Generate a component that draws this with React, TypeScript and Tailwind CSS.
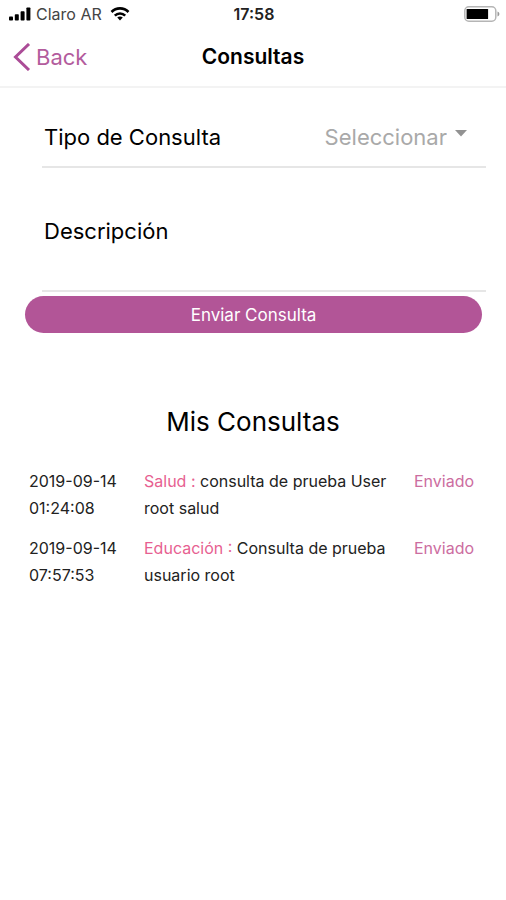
interface Consulta {
  fecha: string;
  hora: string;
  tipo: string;
  descripcion: string;
  estado: string;
}

const consultas: Consulta[] = [
  {
    fecha: "2019-09-14",
    hora: "01:24:08",
    tipo: "Salud",
    descripcion: "consulta de prueba User root salud",
    estado: "Enviado",
  },
  {
    fecha: "2019-09-14",
    hora: "07:57:53",
    tipo: "Educación",
    descripcion: "Consulta de prueba usuario root",
    estado: "Enviado",
  },
];

function App() {
  return (
    <div className="min-h-screen bg-white text-black font-['Inter','Liberation_Sans',sans-serif]">
      <StatusBar />
      <header className="grid grid-cols-[1fr_auto_1fr] items-center h-[60px] px-3 border-b-2 border-[#f3f3f3]">
        <a href="#" className="flex items-center gap-1 text-[22px] leading-7 text-[#b35c9d]">
          <BackIcon className="w-5 h-7 text-[#ab4c97]" />
          Back
        </a>
        <h1 className="text-[21px] leading-7 font-semibold">Consultas</h1>
      </header>

      <main className="pt-5">
        <form onSubmit={(e) => e.preventDefault()}>
          <div className="ml-[42px] mr-5 pl-0.5 pr-[19px] h-[60px] flex items-center justify-between border-b-2 border-[#e6e6e6]">
            <label htmlFor="tipo" className="text-[22px] leading-7">Tipo de Consulta</label>
            <div className="flex items-center gap-2">
              <select
                id="tipo"
                defaultValue=""
                className="appearance-none field-sizing-content bg-transparent outline-none text-[22px] leading-7 text-[#a9a9a9]"
              >
                <option value="">Seleccionar</option>
                <option value="salud">Salud</option>
                <option value="educacion">Educación</option>
              </select>
              <CaretIcon className="w-3 h-3 mb-2 text-[#929292]" />
            </div>
          </div>
          <div className="ml-[42px] mr-5 pl-0.5 pt-1 h-[124px] flex items-center gap-4 border-b-2 border-[#e6e6e6]">
            <label htmlFor="descripcion" className="text-[22px] leading-7">Descripción</label>
            <textarea id="descripcion" rows={3} className="flex-1 min-w-0 resize-none outline-none text-[22px] leading-7" />
          </div>
          <div className="pl-[25px] pr-6 pt-1">
            <button type="submit" className="block w-full h-[37px] rounded-full bg-[#b25597] text-white text-[17px] leading-6">
              Enviar Consulta
            </button>
          </div>
        </form>

        <h2 className="mt-[73px] text-center text-[26px] leading-8">Mis Consultas</h2>
        <table className="mt-[30px] w-full table-fixed text-left text-[16px] leading-[27px]">
          <tbody>
            {consultas.map((c) => (
              <tr key={c.hora} className="align-top">
                <td className="w-[144px] pl-[29px] pr-4 pb-[13px] text-[#222222]">
                  <span className="block whitespace-nowrap">{c.fecha}</span>
                  <span className="block whitespace-nowrap">{c.hora}</span>
                </td>
                <td className="pr-4 pb-[13px] text-[#222222]">
                  <span className="text-[#e75f91]">{c.tipo} :</span> {c.descripcion}
                </td>
                <td className="w-[92px] pb-[13px] text-[#cc6d9f]">{c.estado}</td>
              </tr>
            ))}
          </tbody>
        </table>
      </main>
    </div>
  );
}

export default App;

function StatusBar() {
  return (
    <div className="grid grid-cols-[1fr_auto_1fr] items-center h-7 pl-2 pr-1.5 text-[16px] leading-5">
      <div className="flex items-center gap-1 text-[#444444]">
        <SignalIcon className="w-6 h-4 text-black" />
        <span>Claro AR</span>
        <WifiIcon className="w-5 h-4 ml-1 text-black" />
      </div>
      <span className="font-semibold text-[#222222]">17:58</span>
      <BatteryIcon className="w-9 h-4 justify-self-end" />
    </div>
  );
}

function SignalIcon(props: React.SVGProps<SVGSVGElement>) {
  return (
    <svg {...props} viewBox="0 0 24 16" fill="currentColor">
      <rect x="1" y="10.5" width="4" height="4" rx="0.8" />
      <rect x="6.8" y="8.3" width="4" height="6.2" rx="0.8" />
      <rect x="12.6" y="5.3" width="4" height="9.2" rx="0.8" />
      <rect x="18.4" y="1.4" width="4" height="13.1" rx="0.8" />
    </svg>
  );
}

function WifiIcon(props: React.SVGProps<SVGSVGElement>) {
  return (
    <svg {...props} viewBox="0 0 20 16" fill="none" stroke="currentColor" strokeWidth="2.6">
      <path d="M1.5 6C6.2 1.2 13.8 1.2 18.5 6" />
      <path d="M4.8 9.6C7.7 6.7 12.3 6.7 15.2 9.6" />
      <path d="M10 14.5L7.2 11.6C8.8 10.2 11.2 10.2 12.8 11.6Z" fill="currentColor" stroke="none" />
    </svg>
  );
}

function BatteryIcon(props: React.SVGProps<SVGSVGElement>) {
  return (
    <svg {...props} viewBox="0 0 36 16" fill="none">
      <rect x="0.8" y="0.8" width="31" height="14.4" rx="4" stroke="#b5b5b5" strokeWidth="1.5" />
      <rect x="2.6" y="3" width="21.5" height="10" rx="0.6" fill="#000000" />
      <path d="M33.5 5.5C36 6.5 36 9.5 33.5 10.5Z" fill="#999999" />
    </svg>
  );
}

function BackIcon(props: React.SVGProps<SVGSVGElement>) {
  return (
    <svg {...props} viewBox="0 0 20 28" fill="none" stroke="currentColor" strokeWidth="3">
      <path d="M17 1L3.5 14L17 27" />
    </svg>
  );
}

function CaretIcon(props: React.SVGProps<SVGSVGElement>) {
  return (
    <svg {...props} viewBox="0 0 12 12" fill="currentColor">
      <path d="M0 3H12L6 9.5Z" />
    </svg>
  );
}
